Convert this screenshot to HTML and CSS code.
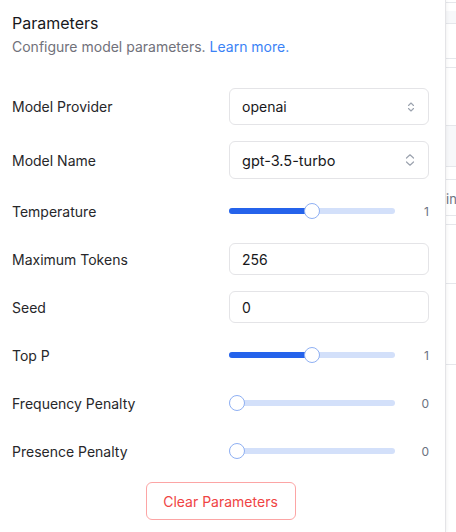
FILE: index.html
```html
<!DOCTYPE html>
<html>
<head>
<meta charset="utf-8">
<link rel="stylesheet" href="styles.css">
</head>
<body>
<div class="screen">
  <aside class="panel">
    <h2 class="title">Parameters</h2>
    <p class="subtitle">Configure model parameters. <a class="link" href="#">Learn more.</a></p>

    <div class="form">
      <label class="label">Model Provider</label>
      <div class="select">
        <span>openai</span>
        <svg class="chev" width="10" height="12" viewBox="0 0 10 12"><path d="M2.5 4.5 L5 2 L7.5 4.5 M2.5 7.5 L5 10 L7.5 7.5" fill="none" stroke="#9ca3af" stroke-width="1.1" stroke-linecap="round" stroke-linejoin="round"/></svg>
      </div>

      <label class="label">Model Name</label>
      <div class="select select-lg">
        <span>gpt-3.5-turbo</span>
        <svg class="chev" width="12" height="14" viewBox="0 0 12 14"><path d="M2.5 5 L6 1.8 L9.5 5 M2.5 9 L6 12.2 L9.5 9" fill="none" stroke="#9ca3af" stroke-width="1.2" stroke-linecap="round" stroke-linejoin="round"/></svg>
      </div>

      <label class="label">Temperature</label>
      <div class="slider-row">
        <div class="track"><div class="fill" style="width:83px"></div><div class="thumb" style="left:75px"></div></div>
        <span class="value">1</span>
      </div>

      <label class="label">Maximum Tokens</label>
      <div class="input">256</div>

      <label class="label">Seed</label>
      <div class="input">0</div>

      <label class="label">Top P</label>
      <div class="slider-row">
        <div class="track"><div class="fill" style="width:83px"></div><div class="thumb" style="left:75px"></div></div>
        <span class="value">1</span>
      </div>

      <label class="label">Frequency Penalty</label>
      <div class="slider-row">
        <div class="track"><div class="fill" style="width:0px"></div><div class="thumb" style="left:0px"></div></div>
        <span class="value">0</span>
      </div>

      <label class="label">Presence Penalty</label>
      <div class="slider-row">
        <div class="track"><div class="fill" style="width:0px"></div><div class="thumb" style="left:0px"></div></div>
        <span class="value">0</span>
      </div>
    </div>

    <div class="actions">
      <button class="clear">Clear Parameters</button>
    </div>
  </aside>
  <div class="backdrop">
    <div class="bg-line" style="top:2px"></div>
    <div class="bg-fill" style="top:11px;height:12px"></div>
    <div class="bg-line" style="top:23px"></div>
    <div class="bg-line" style="top:58px"></div>
    <div class="bg-line" style="top:67px"></div>
    <div class="bg-fill" style="top:126px;height:41px"></div>
    <div class="bg-line" style="top:125px"></div>
    <div class="bg-line" style="top:166px"></div>
    <div class="bg-line" style="top:179px"></div>
    <span class="bg-text">in</span>
    <div class="bg-line" style="top:215px"></div>
    <div class="bg-line" style="top:224px"></div>
    <div class="bg-line" style="top:283px"></div>
    <div class="bg-line" style="top:364px"></div>
  </div>
</div>
</body>
</html>
```

FILE: styles.css
```css
* { box-sizing: border-box; }
html, body { margin: 0; padding: 0; background: #fff; }
body {
  font-family: Inter, "Noto Sans", "Liberation Sans", sans-serif;
  color: #1f2328;
  width: 456px;
  height: 532px;
  overflow: hidden;
}
.screen {
  display: flex;
  height: 532px;
}
.panel {
  width: 446px;
  flex: none;
  border-right: 1px solid #e4e4e7;
  box-shadow: 1px 0 3px rgba(0,0,0,0.05);
  padding: 11px 16px 0 12px;
  background: #fff;
  position: relative;
  z-index: 1;
}
.title {
  margin: 0;
  font-size: 16px;
  line-height: 24px;
  font-weight: 400;
  color: #18181b;
}
.subtitle {
  margin: 2px 0 0;
  font-size: 14px;
  line-height: 20px;
  color: #71717a;
}
.link { color: #3b82f6; text-decoration: none; }
.form {
  margin-top: 31px;
  display: grid;
  grid-template-columns: 217px 200px;
  row-gap: 16px;
  align-items: center;
}
.label {
  font-size: 14px;
  color: #27272a;
}
.select {
  height: 37px;
  border: 1px solid #e4e4e7;
  border-radius: 6px;
  display: flex;
  align-items: center;
  justify-content: space-between;
  padding: 0 12px 0 12px;
  font-size: 14px;
  color: #18181b;
}
.select-lg { height: 38px; font-size: 14.5px; }
.chev { display: block; }
.input {
  height: 32px;
  border: 1px solid #e4e4e7;
  border-radius: 6px;
  display: flex;
  align-items: center;
  padding: 0 12px;
  font-size: 14px;
  color: #18181b;
}
.slider-row {
  height: 32px;
  display: flex;
  align-items: center;
}
.track {
  position: relative;
  width: 166px;
  height: 6px;
  border-radius: 3px;
  background: #d3e0fa;
}
.fill {
  height: 6px;
  border-radius: 3px;
  background: #2563eb;
}
.thumb {
  position: absolute;
  top: -5px;
  width: 16px;
  height: 16px;
  border-radius: 50%;
  background: #fff;
  border: 1.5px solid #8fb0f3;
}
.value {
  flex: 1;
  text-align: right;
  font-size: 12px;
  color: #6b7280;
}
.actions {
  display: flex;
  justify-content: center;
  margin-top: 15px;
}
.clear {
  width: 150px;
  height: 38px;
  border: 1px solid #fca5a5;
  border-radius: 6px;
  background: #fff;
  color: #ef4444;
  font-family: inherit;
  font-size: 14px;
  cursor: pointer;
}
.backdrop {
  flex: 1;
  position: relative;
  background: #fff;
  overflow: hidden;
}
.bg-line {
  position: absolute;
  left: 0;
  right: 0;
  height: 1px;
  background: #e5e7eb;
}
.bg-fill {
  position: absolute;
  left: 0;
  right: 0;
  background: #f7f8fa;
}
.bg-text {
  position: absolute;
  top: 191px;
  left: 0;
  font-size: 13px;
  color: #6b7280;
}
```
